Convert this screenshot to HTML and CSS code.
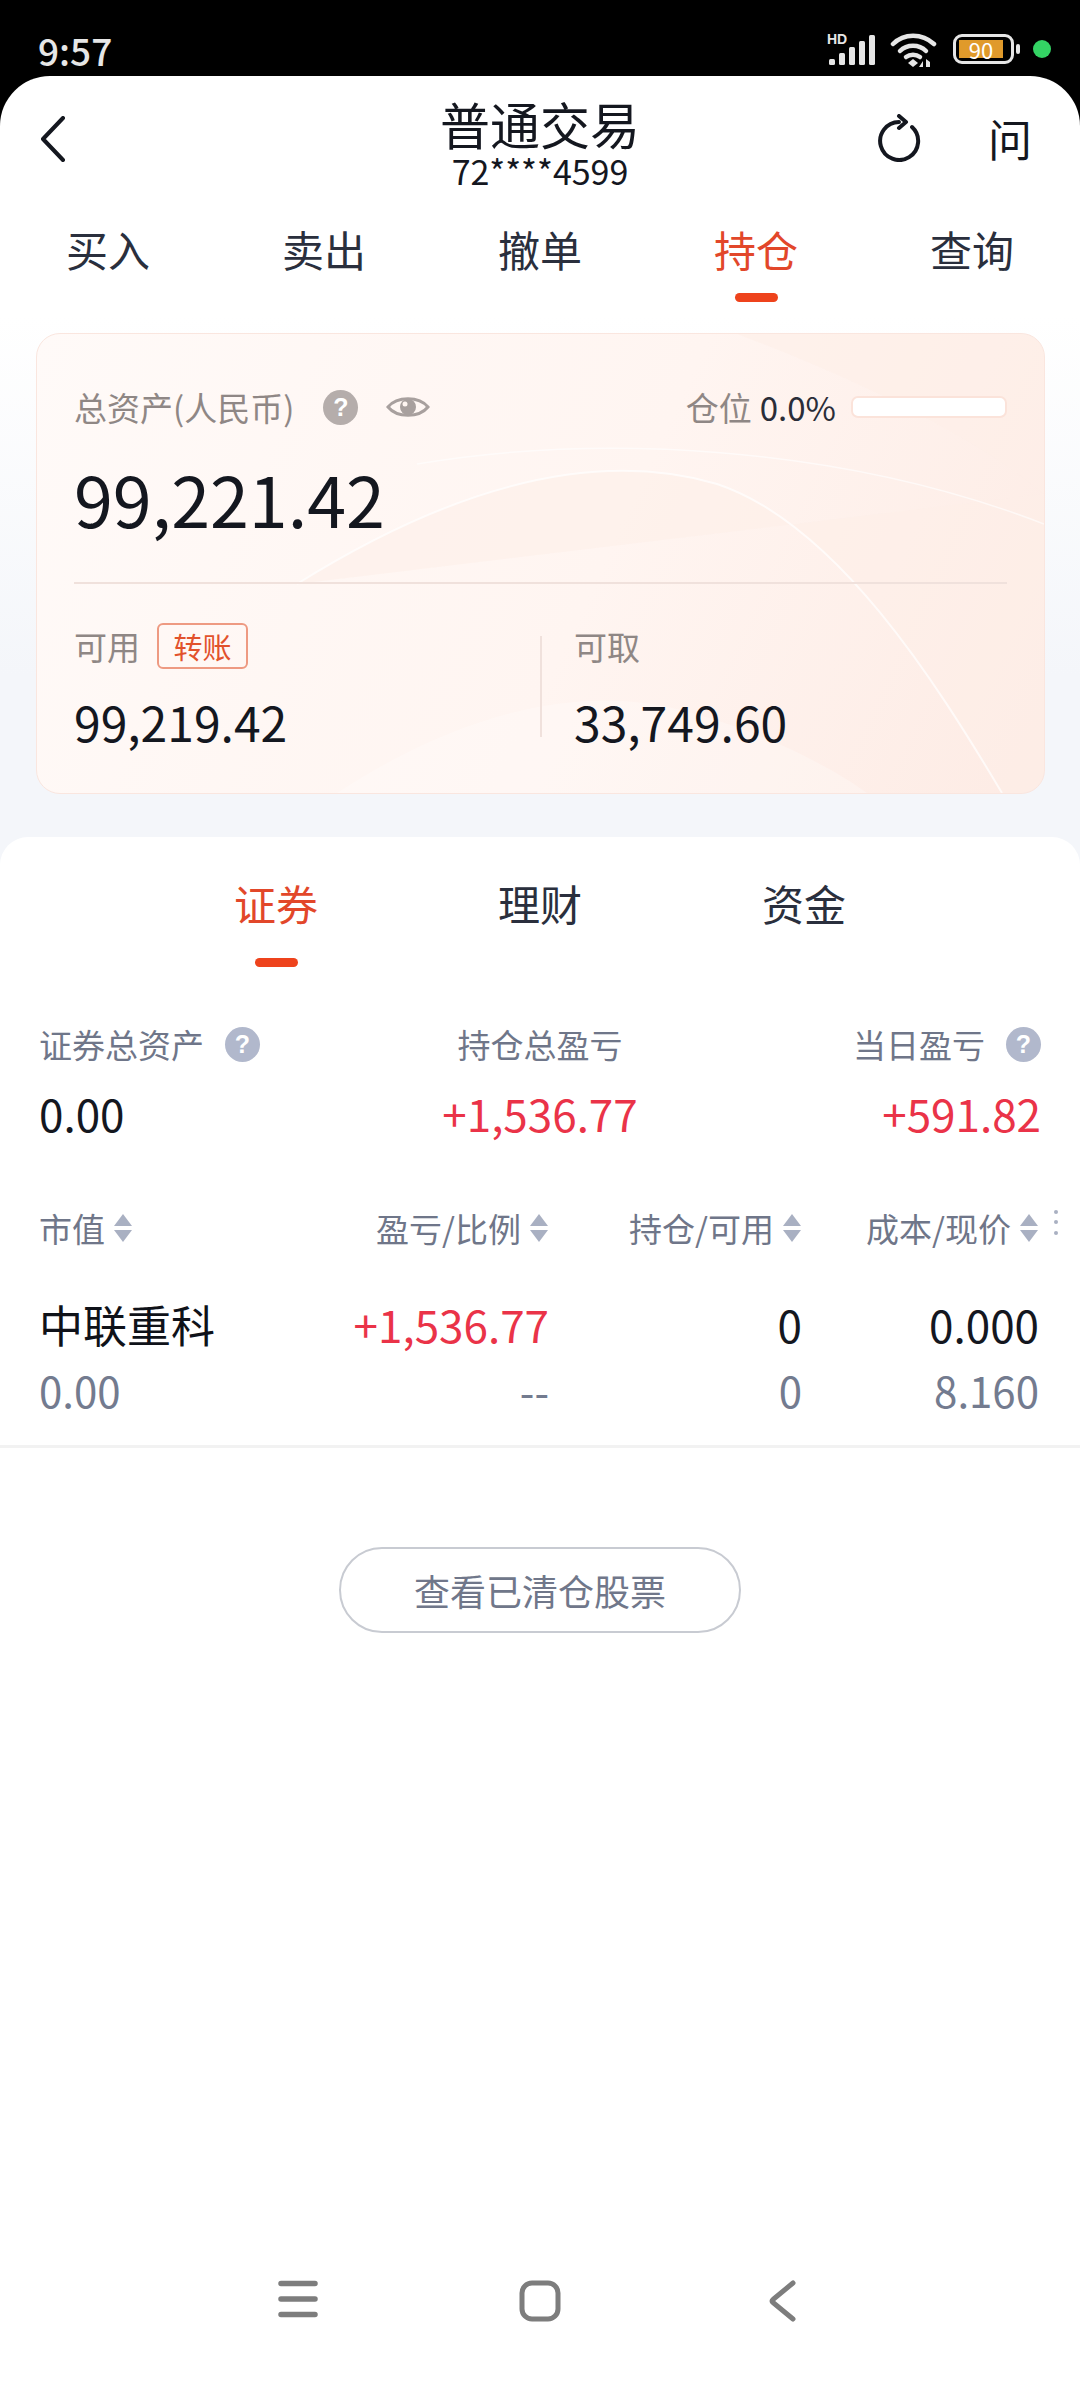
FILE: index.html
```html
<!DOCTYPE html>
<html lang="zh-CN">
<head>
<meta charset="utf-8">
<title>普通交易</title>
<link rel="stylesheet" href="styles.css">
</head>
<body>
<div class="screen">
  <div class="status">
    <span class="clock">9:57</span>
    <div class="status-icons">
      <svg class="signal" width="50" height="32" viewBox="0 0 50 32">
        <text class="hd" x="0" y="10">HD</text>
        <g fill="#e6e6e6">
          <rect x="2" y="25" width="6" height="6" rx="1.5"/>
          <rect x="12" y="19" width="6" height="12" rx="1.5"/>
          <rect x="22" y="13" width="6" height="18" rx="1.5"/>
          <rect x="32" y="7" width="6" height="24" rx="1.5"/>
          <rect x="42" y="1" width="6" height="30" rx="1.5"/>
        </g>
      </svg>
      <svg class="wifi" width="47" height="34" viewBox="0 0 47 34">
        <g fill="none" stroke="#e6e6e6" stroke-width="4.5" stroke-linecap="round">
          <path d="M3 11C14 0 32 0 44 11"/>
          <path d="M10 18C17 11 29 11 36 18"/>
          <path d="M16 24C20 21 26 21 30 24"/>
        </g>
        <path d="M23 26l5 4-5 4-5-4z" fill="#e6e6e6"/>
        <path d="M33 34v-6l-4 6zM36 34v-8l4 3v5z" fill="#e6e6e6"/>
      </svg>
      <div class="battery">
        <div class="battery-body"><span class="battery-fill">90</span></div>
        <span class="battery-nub"></span>
      </div>
      <span class="cam-dot"></span>
    </div>
  </div>

  <div class="sheet">
    <header class="head">
      <div class="head-left">
        <svg width="26" height="46" viewBox="0 0 26 46">
          <path d="M23 2L3 23l20 21" fill="none" stroke="#14171f" stroke-width="4" stroke-linecap="round" stroke-linejoin="round"/>
        </svg>
      </div>
      <div class="head-title">
        <div class="title">普通交易</div>
        <div class="account">72****4599</div>
      </div>
      <div class="head-right">
        <svg width="44" height="48" viewBox="0 0 44 48">
          <path d="M35 13A19 19 0 1 1 22 8" fill="none" stroke="#14171f" stroke-width="4" stroke-linecap="round"/>
          <path d="M22 2l7 6-7 6" fill="none" stroke="#14171f" stroke-width="4" stroke-linecap="round" stroke-linejoin="round"/>
        </svg>
        <span class="ask">问</span>
      </div>
    </header>

    <nav class="tabs">
      <div class="tab">买入</div>
      <div class="tab">卖出</div>
      <div class="tab">撤单</div>
      <div class="tab is-active">持仓<i class="tab-mark"></i></div>
      <div class="tab">查询</div>
    </nav>

    <section class="card">
      <svg class="card-waves" viewBox="0 0 1007 459" preserveAspectRatio="none">
        <path d="M260 250C420 150 560 115 680 150C800 190 900 350 965 459H1007V0H700C860 60 960 120 1007 160" fill="#fdeee8" opacity="0.55"/>
        <path d="M260 250C420 150 560 115 680 150C800 190 900 350 965 459" fill="none" stroke="#fff" stroke-width="2" opacity="0.7"/>
        <path d="M380 130C560 100 800 110 1007 190" fill="none" stroke="#fff" stroke-width="1.5" opacity="0.6"/>
        <path d="M300 459C420 380 540 350 640 375C720 395 790 430 830 459Z" fill="#fff" opacity="0.25"/>
      </svg>
      <div class="card-top">
        <span class="muted">总资产(人民币)</span>
        <span class="help help-warm">?</span>
        <svg class="eye" width="44" height="28" viewBox="0 0 44 28">
          <path d="M2 14C11 3 33 3 42 14C33 25 11 25 2 14Z" fill="none" stroke="#a8a09e" stroke-width="3"/>
          <circle cx="22" cy="14" r="8" fill="#a8a09e"/>
          <circle cx="19" cy="11" r="2.5" fill="#fff6f2"/>
        </svg>
        <span class="spacer"></span>
        <span class="muted">仓位</span>
        <span class="ratio">0.0%</span>
        <span class="ratio-bar"></span>
      </div>
      <div class="amount">99,221.42</div>
      <div class="card-rule"></div>
      <div class="card-split">
        <div class="card-col">
          <div class="col-label">
            <span class="muted">可用</span>
            <span class="transfer">转账</span>
          </div>
          <div class="col-value">99,219.42</div>
        </div>
        <div class="col-rule"></div>
        <div class="card-col card-col-right">
          <div class="col-label"><span class="muted">可取</span></div>
          <div class="col-value">33,749.60</div>
        </div>
      </div>
    </section>

    <main class="panel">
      <nav class="subtabs">
        <div class="subtab is-active">证券<i class="tab-mark"></i></div>
        <div class="subtab">理财</div>
        <div class="subtab">资金</div>
      </nav>

      <div class="stats">
        <div class="stat">
          <div class="stat-label">证券总资产<span class="help help-cool">?</span></div>
          <div class="stat-value">0.00</div>
        </div>
        <div class="stat stat-mid">
          <div class="stat-label">持仓总盈亏</div>
          <div class="stat-value up">+1,536.77</div>
        </div>
        <div class="stat stat-end">
          <div class="stat-label">当日盈亏<span class="help help-cool">?</span></div>
          <div class="stat-value up">+591.82</div>
        </div>
      </div>

      <div class="grid grid-head">
        <div class="th th-start">市值<i class="sort"></i></div>
        <div class="th">盈亏/比例<i class="sort"></i></div>
        <div class="th">持仓/可用<i class="sort"></i></div>
        <div class="th">成本/现价<i class="sort"></i></div>
        <i class="more"></i>
      </div>

      <div class="grid grid-row">
        <div class="cell-start stock">中联重科</div>
        <div class="cell up">+1,536.77</div>
        <div class="cell">0</div>
        <div class="cell">0.000</div>
        <div class="cell-start sub">0.00</div>
        <div class="cell sub">--</div>
        <div class="cell sub">0</div>
        <div class="cell sub">8.160</div>
      </div>

      <div class="closed-wrap">
        <button class="closed">查看已清仓股票</button>
      </div>

      <div class="sys-nav">
        <svg width="40" height="38" viewBox="0 0 40 38">
          <g stroke="#7d7d7d" stroke-width="5.5" stroke-linecap="round">
            <path d="M3 3.500H37M3 19H37M3 34.500H37"/>
          </g>
        </svg>
        <svg width="42" height="42" viewBox="0 0 42 42">
          <rect x="3" y="3" width="36" height="36" rx="10" fill="none" stroke="#7d7d7d" stroke-width="5"/>
        </svg>
        <svg width="28" height="42" viewBox="0 0 28 42">
          <path d="M25 3L5 19.500Q3 21 5 22.500L25 39" fill="none" stroke="#7d7d7d" stroke-width="5" stroke-linecap="round"/>
        </svg>
      </div>
    </main>
  </div>
</div>
</body>
</html>
```

FILE: styles.css
```css
* { box-sizing: border-box; margin: 0; padding: 0; }

html, body { width: 1080px; height: 2408px; overflow: hidden; }

body {
  font-family: "Noto Sans CJK SC", "Noto Sans", sans-serif;
  color: #14171f;
  background: #000;
}

.screen { width: 1080px; height: 2408px; display: flex; flex-direction: column; background: #000; }

/* Status bar */
.status { height: 76px; flex: none; display: flex; align-items: flex-start; justify-content: space-between; padding: 26px 29px 0 38px; }
.clock { font-size: 37px; line-height: 48px; font-weight: 500; color: #e6e6e6; }
.status-icons { display: flex; align-items: flex-start; padding-top: 8px; }
.signal { margin-left: 0; }
.hd { font: 700 14px "Liberation Sans", sans-serif; fill: #e6e6e6; }
.wifi { margin-left: 13px; margin-top: -1px; }
.battery { display: flex; align-items: center; margin-left: 16px; }
.battery-body { width: 61px; height: 30px; border: 3px solid #e6e6e6; border-radius: 9px; padding: 3px 8px 3px 3px; }
.battery-fill { display: block; height: 18px; background: #e09a2b; color: #fff; font-size: 22px; line-height: 18px; text-align: center; }
.battery-nub { width: 4px; height: 10px; background: #e6e6e6; border-radius: 2px; margin-left: 2px; }
.cam-dot { width: 18px; height: 18px; border-radius: 50%; background: #34d364; margin: 6px 0 0 13px; }

/* Main sheet */
.sheet {
  flex: 1;
  display: flex;
  flex-direction: column;
  border-radius: 50px 50px 0 0;
  background: linear-gradient(180deg, #fff 0, #fff 240px, #f4f6fa 600px);
}

.head { height: 115px; flex: none; display: grid; grid-template-columns: 1fr auto 1fr; }
.head-left { padding: 40px 0 0 40px; }
.head-right { display: flex; justify-content: flex-end; padding: 38px 48px 0 0; }
.head-right svg { margin-right: 67px; }
.ask { font-size: 44px; line-height: 48px; }
.head-title { text-align: center; padding-top: 19px; }
.title { font-size: 50px; line-height: 56px; }
.account { font-size: 34px; line-height: 40px; }

.tabs { display: grid; grid-template-columns: repeat(5, 216px); margin-top: 28px; flex: none; }
.tab { text-align: center; font-size: 42px; line-height: 60px; color: #2a2f3d; }
.tab.is-active, .subtab.is-active { color: #e2472a; }
.tab-mark { display: block; width: 43px; height: 9px; margin: 14px auto 0; border-radius: 5px; background: #ee431c; }

/* Asset card */
.card {
  position: relative;
  overflow: hidden;
  flex: none;
  width: 1009px;
  height: 461px;
  margin: 31px 0 0 36px;
  padding: 51px 37px 0;
  border: 1px solid #fae6df;
  border-radius: 24px;
  background: linear-gradient(115deg, #fffaf8 0%, #fff5f1 55%, #fdebe4 100%);
}
.card-waves { position: absolute; left: 0; top: 0; width: 100%; height: 100%; }
.card > div { position: relative; }

.card-top { display: flex; align-items: center; height: 44px; }
.muted { font-size: 33px; line-height: 44px; color: #8f8785; }
.help { display: inline-block; width: 35px; height: 35px; border-radius: 50%; color: #fff; font: 700 25px/35px "Liberation Sans", sans-serif; text-align: center; }
.help-warm { background: #b5adab; margin-left: 29px; }
.help-cool { background: #b1b8cc; margin-left: 21px; }
.eye { margin-left: 28px; }
.spacer { flex: 1; }
.ratio { font-size: 33px; line-height: 44px; margin-left: 8px; color: #2a2d38; }
.ratio-bar { width: 156px; height: 22px; margin: 0 0 0 15px; background: #fff; border: 2px solid #fbe3da; border-radius: 7px; }

.amount { font-size: 70px; line-height: 80px; margin-top: 29px; }
.card-rule { height: 2px; margin-top: 44px; background: #f0e1dc; }

.card-split { display: flex; margin-top: 39px; }
.card-col { width: 466px; flex: none; }
.card-col-right { padding-left: 32px; }
.col-label { display: flex; align-items: center; height: 46px; }
.col-value { font-size: 48px; line-height: 60px; margin-top: 22px; }
.col-rule { width: 2px; height: 101px; margin-top: 13px; background: #f0e1dc; flex: none; }
.transfer { width: 91px; height: 46px; margin-left: 17px; border: 2px solid #ee9a82; border-radius: 6px; font-size: 29px; line-height: 42px; text-align: center; color: #e2522c; }

/* Lower panel */
.panel {
  flex: 1;
  display: flex;
  flex-direction: column;
  margin-top: 43px;
  background: #fff;
  border-radius: 28px 28px 0 0;
}

.subtabs { display: flex; justify-content: center; padding-top: 36px; flex: none; }
.subtab { width: 264px; text-align: center; font-size: 42px; line-height: 60px; color: #2a2f3d; }
.subtab .tab-mark { margin-top: 25px; }
.stats { display: grid; grid-template-columns: 1fr 1fr 1fr; padding: 0 39px; margin-top: -19px; flex: none; }
.stats { margin-top: 51px; }
.subtabs { height: 136px; }
.stat-label { display: flex; align-items: center; font-size: 33px; line-height: 40px; color: #6f7689; }
.stat-value { font-size: 44px; line-height: 60px; margin-top: 19px; }
.stat-mid .stat-label { justify-content: center; }
.stat-mid .stat-value { text-align: center; }
.stat-end .stat-label { justify-content: flex-end; }
.stat-end .stat-value { text-align: right; }
.up { color: #ea3348; }

.grid { position: relative; display: grid; grid-template-columns: 270px 240px 253px 237px; padding: 0 0 0 39px; }
.grid-head { margin-top: 65px; height: 40px; }
.th { display: flex; justify-content: flex-end; align-items: center; font-size: 33px; line-height: 40px; color: #6f7689; }
.th-start { justify-content: flex-start; }
.sort { position: relative; width: 19px; height: 28px; margin-left: 9px; }
.sort::before, .sort::after { content: ""; position: absolute; left: 0; border-left: 9.500px solid transparent; border-right: 9.500px solid transparent; }
.sort::before { top: 0; border-bottom: 12px solid #a9b0c2; }
.sort::after { bottom: 0; border-top: 12px solid #a9b0c2; }
.more { position: absolute; left: 1054px; top: 2px; width: 4px; height: 4px; border-radius: 50%; background: #a9b0c2; box-shadow: 0 10px #a9b0c2, 0 21px #a9b0c2; }

.grid-row { margin-top: 46px; padding-bottom: 20px; border-bottom: 3px solid #f2f2f2; row-gap: 0; height: 154px; }
.stock { font-size: 45px; line-height: 60px; color: #0f1219; }
.cell, .cell-start { font-size: 44px; line-height: 60px; }
.cell { text-align: right; }
.sub, .cell.sub { font-size: 42px; line-height: 60px; color: #737b8f; margin-top: 0; }

.closed-wrap { display: flex; justify-content: center; margin-top: 99px; flex: none; }
.closed { width: 402px; height: 86px; border: 2px solid #c8cbd2; border-radius: 43px; background: #fff; font: inherit; font-size: 36px; color: #70778a; }

.sys-nav { margin-top: auto; height: 128px; flex: none; display: flex; align-items: flex-start; padding: 0 0 0 278px; }
.sys-nav svg:nth-child(2) { margin-left: 201px; }
.sys-nav svg:nth-child(3) { margin-left: 207px; }
```
